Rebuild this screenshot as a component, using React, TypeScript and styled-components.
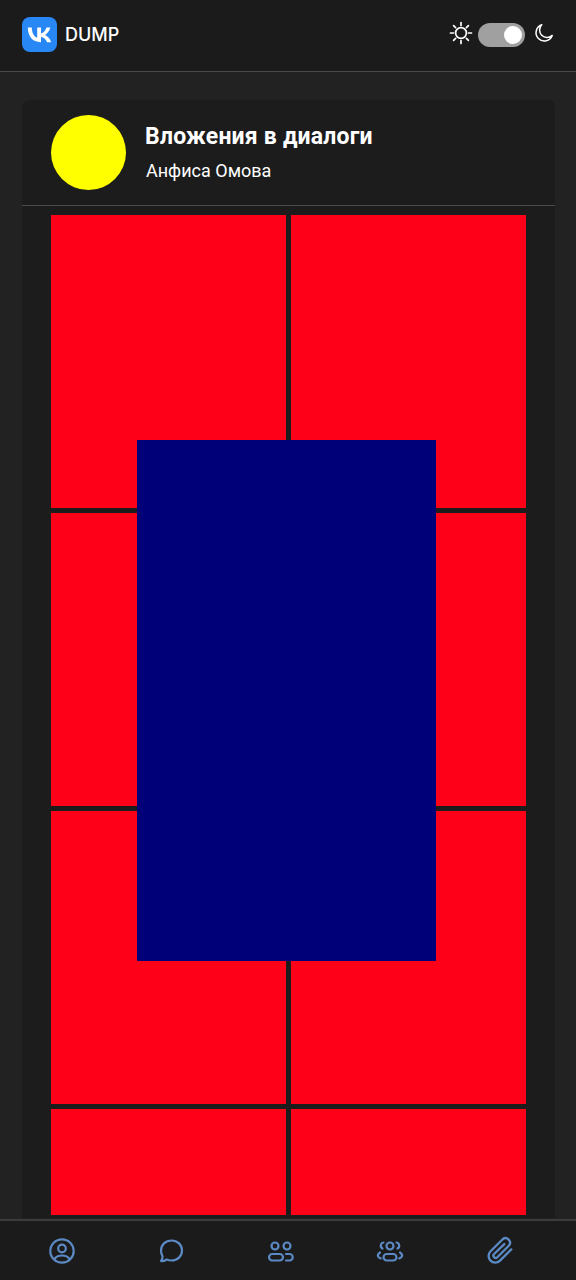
import React from "react";
import styled, { createGlobalStyle } from "styled-components";

const Global = createGlobalStyle`
  html, body { margin: 0; padding: 0; background: #222222; }
  * { box-sizing: border-box; }
`;
const Page = styled.div`
  width: 576px; height: 1280px; display: flex; flex-direction: column; overflow: hidden;
  background: #222222; font-family: "Liberation Sans", Arial, sans-serif; color: #fff;
`;
const TopBar = styled.header`
  height: 72px; flex: none; display: flex; align-items: flex-start; justify-content: space-between;
  background: #1b1b1b; border-bottom: 1px solid #4a4a4a; padding: 17px 22px 0 22px;
`;
const Brand = styled.div`display: flex; align-items: center; gap: 8px; height: 35px;`;
const BrandName = styled.span`font: 500 18px/35px Inter, sans-serif; color: #fff;`;
const ThemeSwitch = styled.div`display: flex; align-items: center; height: 31px; gap: 5px;`;
const Track = styled.div`
  width: 47px; height: 24px; border-radius: 12px; background: #a0a0a0; position: relative; margin-top: 5px;
`;
const Knob = styled.div`
  position: absolute; top: 3px; right: 3px; width: 18px; height: 18px; border-radius: 50%; background: #fff;
`;
const MoonIcon = styled.svg`margin-left: 4px;`;
const Main = styled.main`flex: 1; min-height: 0; padding: 28px 21px 0 22px;`;
const Card = styled.section`
  height: 1118px; background: #1c1c1c; border-radius: 8px 8px 0 0; position: relative; overflow: hidden;
`;
const CardHead = styled.div`
  height: 106px; border-bottom: 1px solid #4a4a4a; display: flex; align-items: flex-start;
  padding: 15px 29px 0; gap: 19px;
`;
const Avatar = styled.div`width: 75px; height: 75px; border-radius: 50%; background: #ffff00; flex: none;`;
const Titles = styled.div`display: flex; flex-direction: column; padding-top: 7px;`;
const Title = styled.h1`margin: 0; font: 700 23px/30px Roboto, sans-serif; letter-spacing: 0.2px; color: #fff;`;
const Subtitle = styled.div`margin: 6px 0 0 1px; font: 400 18px/26px Roboto, sans-serif; color: #fff;`;
const Tiles = styled.div`
  margin: 9px 29px 0; height: 1000px; overflow: hidden; display: grid;
  grid-template-columns: 235px 235px; grid-auto-rows: 293px; gap: 5px;
`;
const Tile = styled.div`background: #ff0019;`;
const Overlay = styled.div`
  position: absolute; left: 115px; top: 340px; width: 299px; height: 521px; background: #000078;
`;
const BottomNav = styled.nav`
  height: 61px; flex: none; background: #1b1b1b; border-top: 2px solid #3c3c3c;
  display: grid; grid-template-columns: repeat(5, 109.5px); padding-left: 7px;
`;
const NavItem = styled.div`display: flex; align-items: center; justify-content: center; color: #5b89c4;`;

const VkLogo = () => (
  <svg width="35" height="35" viewBox="0 0 35 35">
    <rect width="35" height="35" rx="8" fill="#2787f5" />
    <path fill="#fff" d="M18.6 25.2C10.6 25.2 6 19.700 5.800 10.600h4c.1 6.700 3.100 9.500 5.400 10.100V10.600H19v5.800c2.300-.3 4.700-2.900 5.500-5.800h3.800c-.6 3.600-3.300 6.200-5.200 7.300 1.900.9 5 3.200 6.100 7.300h-4.200c-.9-2.800-3.100-4.900-6-5.200v5.200h-.4Z" />
  </svg>
);
const Sun = () => (
  <svg width="24" height="24" viewBox="0 0 24 24" fill="none" stroke="#fff" strokeWidth="1.7" strokeLinecap="round">
    <circle cx="12" cy="12" r="5.400" />
    <path d="M12 1.500v3M12 19.500v3M1.500 12h3M19.500 12h3M4.600 4.600l2 2M17.400 17.400l2 2M4.600 19.400l2-2M17.400 6.600l2-2" />
  </svg>
);
const Moon = () => (
  <MoonIcon width="20" height="20" viewBox="0 0 20 20" fill="none" stroke="#fff" strokeWidth="1.500" strokeLinejoin="round">
    <path d="M7.800 1.800a8.300 8.300 0 1 0 10.400 10.600 7.200 7.200 0 0 1-10.400-10.600Z" />
  </MoonIcon>
);
const Ico = ({ children, size = 28 }: { children: React.ReactNode; size?: number }) => (
  <svg width={size} height={size} viewBox="0 0 28 28" fill="none" stroke="currentColor" strokeWidth="2.200" strokeLinecap="round" strokeLinejoin="round">
    {children}
  </svg>
);

const tiles = Array.from({ length: 8 }, (_, i) => i);

export default function App() {
  return (
    <Page>
      <Global />
      <TopBar>
        <Brand><VkLogo /><BrandName>DUMP</BrandName></Brand>
        <ThemeSwitch>
          <Sun />
          <Track><Knob /></Track>
          <Moon />
        </ThemeSwitch>
      </TopBar>
      <Main>
        <Card>
          <CardHead>
            <Avatar />
            <Titles>
              <Title>Вложения в диалоги</Title>
              <Subtitle>Анфиса Омова</Subtitle>
            </Titles>
          </CardHead>
          <Tiles>{tiles.map((t) => <Tile key={t} />)}</Tiles>
          <Overlay />
        </Card>
      </Main>
      <BottomNav>
        <NavItem>
          <Ico>
            <circle cx="14" cy="14" r="11.700" />
            <circle cx="14" cy="11.500" r="3.800" />
            <path d="M6.500 22c1.500-2.500 4-3.500 7.500-3.500s6 1 7.500 3.500" />
          </Ico>
        </NavItem>
        <NavItem>
          <Ico>
            <path d="M14.500 3.500c6 0 10.500 4.300 10.500 10s-4.500 10-10.500 10c-1.700 0-3.300-.3-4.700-1-1.500 1-3.300 1.700-5.300 1.700-.5 0-.6-.4-.3-.7 1-1 1.500-2.500 1.300-4.200-1-1.700-1.500-3.600-1.500-5.800 0-5.700 4.500-10 10.500-10Z" />
          </Ico>
        </NavItem>
        <NavItem>
          <Ico>
            <circle cx="8" cy="9" r="3.500" />
            <circle cx="20" cy="9" r="3.500" />
            <rect x="2" y="17" width="14" height="6.500" rx="3.250" />
            <path d="M19 17h3.500a3.250 3.250 0 0 1 0 6.500H19" />
          </Ico>
        </NavItem>
        <NavItem>
          <Ico>
            <circle cx="14" cy="9" r="3.500" />
            <rect x="7.500" y="17" width="13" height="6.500" rx="3.250" />
            <path d="M7.500 5.500a3.200 3.200 0 0 0-1 6M20.500 5.500a3.200 3.200 0 0 1 1 6M4 15.500c-1.500 1-2.500 2.300-2 3.800.3 1 1.300 1.700 2.700 2M24 15.500c1.500 1 2.500 2.300 2 3.800-.3 1-1.300 1.700-2.700 2" />
          </Ico>
        </NavItem>
        <NavItem>
          <Ico size={30}>
            <path d="M24.500 12.500 14 23a6.200 6.200 0 0 1-8.800-8.800L16.500 3a4.200 4.200 0 0 1 5.900 5.900L11.500 19.800a2.100 2.100 0 0 1-3-3L18 7.500" />
          </Ico>
        </NavItem>
      </BottomNav>
    </Page>
  );
}
